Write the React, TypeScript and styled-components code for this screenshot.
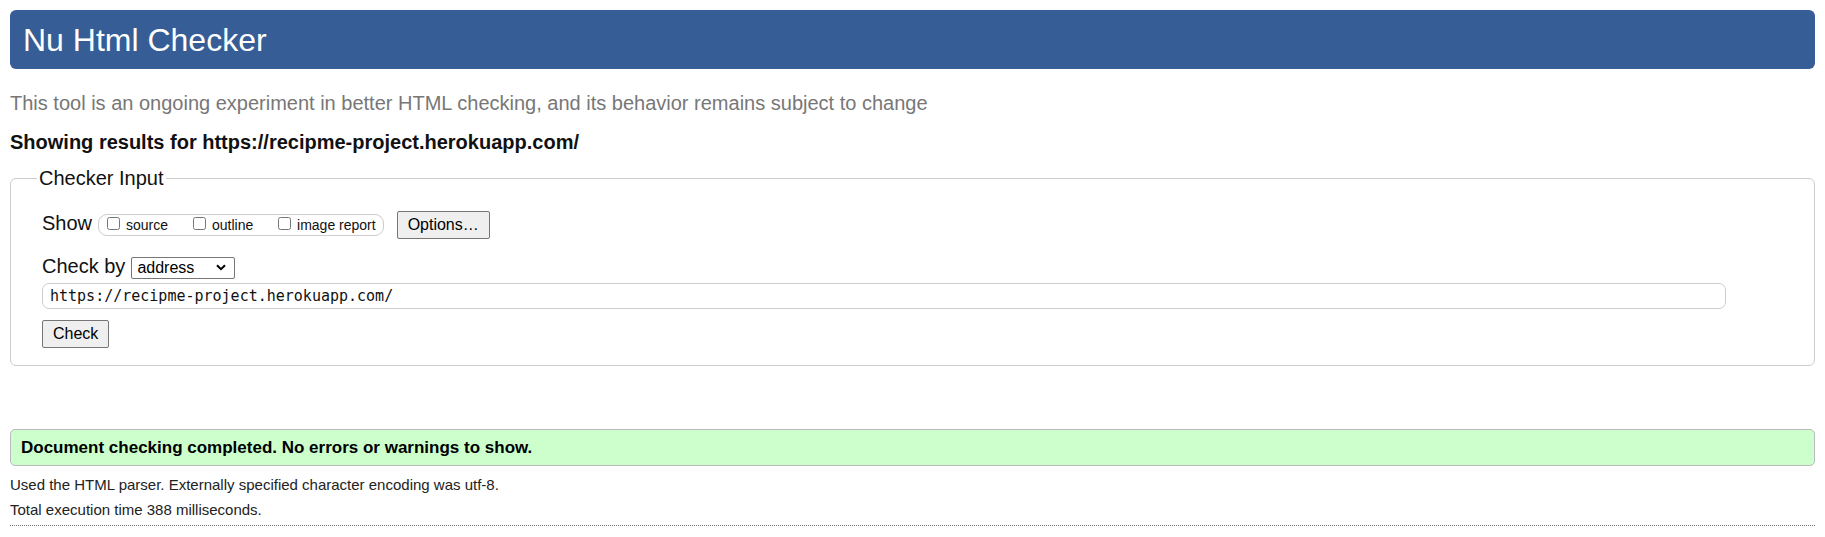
import React from "react";
import styled, { createGlobalStyle } from "styled-components";

const GlobalStyle = createGlobalStyle`
  html, body {
    margin: 0;
    padding: 0;
    background: #ffffff;
  }
  body {
    font-family: "Liberation Sans", Arial, sans-serif;
    color: #111111;
  }
`;

const Page = styled.div`
  padding: 10px 10px 0 10px;
`;

const Header = styled.header`
  height: 59px;
  background: #365d95;
  border-radius: 6px;
  display: flex;
  align-items: center;
  padding-left: 13px;
`;

const Title = styled.h1`
  margin: 0;
  font-size: 32px;
  font-weight: normal;
  color: #ffffff;
  line-height: 36px;
`;

const Subtitle = styled.p`
  margin: 22px 0 0 0;
  font-size: 20px;
  line-height: 24px;
  color: #777777;
`;

const ResultsFor = styled.p`
  margin: 15px 0 0 0;
  font-size: 20px;
  line-height: 24px;
  font-weight: bold;
  color: #111111;
`;

const InputFieldset = styled.fieldset`
  margin: 12px 0 0 0;
  padding: 21px 31px 17px 31px;
  border: 1px solid #cccccc;
  border-radius: 6px;
`;

const Legend = styled.legend`
  margin-left: -5px;
  padding: 0 2px;
  font-size: 20px;
  line-height: 24px;
  color: #111111;
`;

const Row = styled.div<{ $mt?: number }>`
  display: flex;
  align-items: baseline;
  margin-top: ${(p) => p.$mt ?? 0}px;
`;

const RowLabel = styled.span`
  font-size: 20px;
  line-height: 24px;
  color: #111111;
  margin-right: 6px;
`;

const ShowGroup = styled.div`
  display: inline-flex;
  align-items: baseline;
  border: 1px solid #cccccc;
  border-radius: 9px;
  padding: 2px 7px 2px 8px;
  margin-right: 13px;
`;

const CheckLabel = styled.label<{ $w?: number }>`
  display: inline-flex;
  align-items: baseline;
  font-size: 14px;
  line-height: 16px;
  color: #111111;
  min-width: ${(p) => (p.$w ? `${p.$w}px` : "auto")};
`;

const Checkbox = styled.input.attrs({ type: "checkbox" })`
  width: 13px;
  height: 13px;
  margin: 0 6px 0 0;
`;

const Button = styled.button`
  font-family: "Liberation Sans", Arial, sans-serif;
  font-size: 16px;
  line-height: 18px;
  color: #000000;
  background: #efefef;
  border: 1px solid #767676;
  border-radius: 2px;
  padding: 4px 10px;
`;

const CheckButton = styled(Button)`
  padding: 4px 10px;
`;

const SelectWrap = styled.span`
  position: relative;
  display: inline-block;
`;

const Select = styled.select`
  appearance: none;
  -webkit-appearance: none;
  font-family: "Liberation Sans", Arial, sans-serif;
  font-size: 16px;
  line-height: 19px;
  color: #000000;
  background: #ffffff;
  border: 1px solid #767676;
  border-radius: 2px;
  width: 104px;
  height: 22px;
  padding: 0 0 0 5px;
  margin: 0;
`;

const Chevron = styled.svg`
  position: absolute;
  right: 9px;
  top: 50%;
  margin-top: -4px;
  width: 10px;
  height: 7px;
  pointer-events: none;
`;

const UrlInput = styled.input`
  display: block;
  box-sizing: border-box;
  width: 1684px;
  height: 26px;
  margin-top: 4px;
  padding: 0 7px;
  font-family: "DejaVu Sans Mono", "Liberation Mono", monospace;
  font-size: 15px;
  color: #111111;
  border: 1px solid #cccccc;
  border-radius: 7px;
  background: #ffffff;
  outline: none;
`;

const CheckRow = styled.div`
  margin-top: 11px;
`;

const SuccessBox = styled.div`
  margin-top: 63px;
  background: #ccffcc;
  border: 1px solid #bbbbbb;
  border-radius: 5px;
  padding: 8px 10px 7px 10px;
  font-size: 17px;
  line-height: 20px;
  font-weight: bold;
  color: #000000;
`;

const Details = styled.p<{ $mt: number }>`
  margin: ${(p) => p.$mt}px 0 0 0;
  font-size: 15px;
  line-height: 25px;
  color: #222222;
`;

const Divider = styled.hr`
  margin: 3px 0 0 0;
  border: 0;
  border-top: 1px dotted #777777;
  height: 0;
`;

export default function App() {
  return (
    <>
      <GlobalStyle />
      <Page>
        <Header>
          <Title>Nu Html Checker</Title>
        </Header>
        <Subtitle>
          This tool is an ongoing experiment in better HTML checking, and its
          behavior remains subject to change
        </Subtitle>
        <ResultsFor>
          Showing results for https://recipme-project.herokuapp.com/
        </ResultsFor>
        <InputFieldset>
          <Legend>Checker Input</Legend>
          <Row>
            <RowLabel>Show</RowLabel>
            <ShowGroup>
              <CheckLabel $w={86}>
                <Checkbox />
                source
              </CheckLabel>
              <CheckLabel $w={85}>
                <Checkbox />
                outline
              </CheckLabel>
              <CheckLabel>
                <Checkbox />
                image report
              </CheckLabel>
            </ShowGroup>
            <Button type="button">Options…</Button>
          </Row>
          <Row $mt={15}>
            <RowLabel>Check by</RowLabel>
            <SelectWrap>
              <Select defaultValue="address">
                <option value="address">address</option>
                <option value="file">file upload</option>
                <option value="text">text input</option>
              </Select>
              <Chevron viewBox="0 0 10 7">
                <path
                  d="M1 1.2 L5 5.2 L9 1.2"
                  fill="none"
                  stroke="#000"
                  strokeWidth="2"
                />
              </Chevron>
            </SelectWrap>
          </Row>
          <UrlInput
            type="url"
            defaultValue="https://recipme-project.herokuapp.com/"
          />
          <CheckRow>
            <CheckButton type="button">Check</CheckButton>
          </CheckRow>
        </InputFieldset>
        <SuccessBox>
          Document checking completed. No errors or warnings to show.
        </SuccessBox>
        <Details $mt={6}>
          Used the HTML parser. Externally specified character encoding was
          utf-8.
        </Details>
        <Details $mt={0}>Total execution time 388 milliseconds.</Details>
        <Divider />
      </Page>
    </>
  );
}
